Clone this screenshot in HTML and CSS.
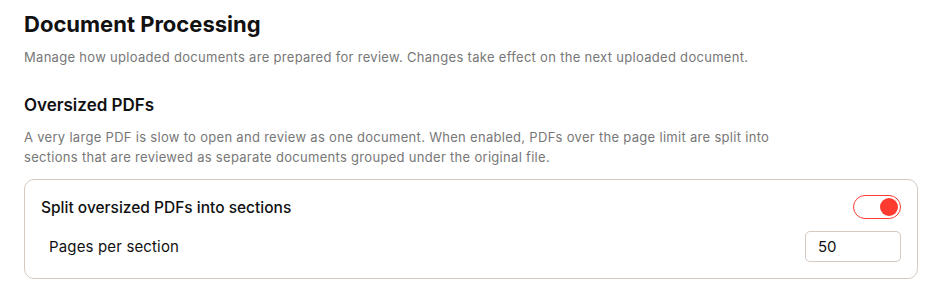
FILE: index.html
```html
<!DOCTYPE html>
<html lang="en">
<head>
  <meta charset="UTF-8" />
  <title>Document Processing</title>
  <link rel="stylesheet" href="styles.css">
</head>
<body>
  <div class="page">
    <h1>Document Processing</h1>
    <p class="lead">Manage how uploaded documents are prepared for review. Changes take effect on the next uploaded document.</p>

    <h2>Oversized PDFs</h2>
    <p class="desc">A very large PDF is slow to open and review as one document. When enabled, PDFs over the page limit are split into sections that are reviewed as separate documents grouped under the original file.</p>

    <div class="card">
      <div class="row">
        <span class="row-title">Split oversized PDFs into sections</span>
        <label class="toggle">
          <input type="checkbox" checked />
          <span class="knob"></span>
        </label>
      </div>
      <div class="row sub">
        <span class="row-label">Pages per section</span>
        <input class="num" type="text" value="50" />
      </div>
    </div>
  </div>
</body>
</html>
```

FILE: styles.css
```css
body {
  margin: 0;
  background: #fff;
  color: #111;
  font-family: Inter, "Noto Sans", sans-serif;
}

.page {
  padding: 10px 24px 0;
}

h1 {
  font-size: 22px;
  font-weight: 700;
  line-height: 28px;
  margin: 0 0 10px;
}

.lead {
  font-size: 13px;
  letter-spacing: 0.3px;
  line-height: 18px;
  color: #777;
  margin: 0 0 27px;
}

h2 {
  font-size: 17px;
  font-weight: 600;
  line-height: 24px;
  margin: 0 0 10px;
}

.desc {
  font-size: 13px;
  letter-spacing: 0.3px;
  line-height: 20px;
  color: #777;
  max-width: 790px;
  margin: 0 0 12px;
}

.card {
  border: 1px solid #d5c9c1;
  border-radius: 10px;
  padding: 15px 16px 16px;
}

.row {
  display: flex;
  align-items: center;
  justify-content: space-between;
}

.row-title {
  font-size: 15.5px;
  font-weight: 500;
}

.row.sub {
  margin-top: 12px;
  padding-left: 8px;
}

.row-label {
  font-size: 15px;
  letter-spacing: 0.15px;
}

.toggle {
  position: relative;
  display: block;
  width: 48px;
  height: 24px;
}

.toggle input {
  display: none;
}

.toggle .knob {
  position: absolute;
  inset: 0;
  box-sizing: border-box;
  border: 1px solid #ff3b30;
  border-radius: 12px;
  background: #fff;
}

.toggle .knob::after {
  content: "";
  position: absolute;
  top: 2px;
  right: 2px;
  width: 18px;
  height: 18px;
  border-radius: 50%;
  background: #ff3b30;
}

.num {
  box-sizing: border-box;
  width: 96px;
  height: 31px;
  border: 1px solid #d5c9c1;
  border-radius: 5px;
  padding: 0 12px;
  font-family: Inter, "Noto Sans", sans-serif;
  font-size: 15px;
  color: #111;
}
```
